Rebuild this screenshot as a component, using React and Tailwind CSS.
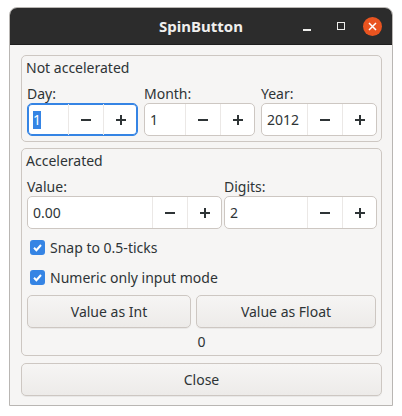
import React from 'react';

// Small GTK-style widgets used by the SpinButton demo window

const Minus = () => (
  <svg width="12" height="12" viewBox="0 0 12 12">
    <path d="M1 6h10" stroke="#2e3436" strokeWidth="2" />
  </svg>
);

const Plus = () => (
  <svg width="12" height="12" viewBox="0 0 12 12">
    <path d="M1 6h10M6 1v10" stroke="#2e3436" strokeWidth="2" />
  </svg>
);

const Spin = ({ value, width, focused }) => (
  <div
    className={`flex h-[33px] shrink-0 rounded-[5px] border bg-white ${focused ? 'border-[#3584e4] shadow-[inset_0_0_0_1px_#3584e4]' : 'border-[#cdc7c2]'}`}
    style={{ width }}
  >
    <div className="flex flex-1 items-center pl-[5px]">
      {focused ? (
        <span className="bg-[#3584e4] text-white leading-[18px]">{value}</span>
      ) : (
        <span>{value}</span>
      )}
    </div>
    <div className="flex w-[35px] items-center justify-center border-l border-[#ebe8e6]">
      <Minus />
    </div>
    <div className="flex w-[34px] items-center justify-center border-l border-[#ebe8e6]">
      <Plus />
    </div>
  </div>
);

const Labeled = ({ label, children }) => (
  <div className="flex flex-col">
    <div className="flex h-[20px] items-center">{label}</div>
    {children}
  </div>
);

const Check = ({ label }) => (
  <div className="flex h-[30px] items-center pl-[3px]">
    <div className="flex h-[15px] w-[15px] items-center justify-center rounded-[3px] bg-[#3584e4]">
      <svg width="11" height="11" viewBox="0 0 11 11">
        <path d="M2 5.8l2.4 2.4L9 3" stroke="white" strokeWidth="2" fill="none" />
      </svg>
    </div>
    <span className="ml-[5px]">{label}</span>
  </div>
);

const Button = ({ children, className = '' }) => (
  <div
    className={`flex h-[33px] items-center justify-center rounded-[5px] border border-[#cdc7c2] bg-gradient-to-b from-[#f6f5f4] to-[#edebe9] shadow-[0_1px_0_rgba(0,0,0,0.05)] ${className}`}
  >
    {children}
  </div>
);

export default function App() {
  return (
    <div
      className="h-[416px] w-[402px] bg-white pl-[9px] pt-[7px] text-[14px] text-[#2e3436]"
      style={{ fontFamily: '"Noto Sans", "Open Sans", sans-serif' }}
    >
      <div className="flex h-[399px] w-[384px] flex-col overflow-hidden rounded-t-[8px] border border-[#b9b6b3] bg-[#f6f5f4]">
        {/* title bar */}
        <div className="relative flex h-[37px] shrink-0 items-center justify-center border-b border-[#1e1e1e] bg-[#2c2c2c]">
          <span className="text-[15px] font-bold text-[#f0efee]">SpinButton</span>
          <div className="absolute right-[6px] top-0 flex h-[36px] items-center">
            <div className="flex w-[34px] justify-center">
              <div className="mt-[7px] h-[2px] w-[8px] bg-[#eeeeec]" />
            </div>
            <div className="flex w-[34px] justify-center">
              <div className="h-[8px] w-[8px] border border-[#eeeeec]" />
            </div>
            <div className="flex w-[28px] justify-center">
              <div className="flex h-[19px] w-[19px] items-center justify-center rounded-full bg-[#e95420]">
                <svg width="9" height="9" viewBox="0 0 9 9">
                  <path d="M1 1l7 7M8 1l-7 7" stroke="white" strokeWidth="1.5" />
                </svg>
              </div>
            </div>
          </div>
        </div>

        <div className="flex flex-1 flex-col pl-[11px] pr-[10px] pt-[10px]">
          {/* not accelerated */}
          <div className="flex flex-col rounded-[5px] border border-[#cdc7c2] px-[5px] pb-[5px]">
            <div className="-ml-[1px] flex h-[22px] items-center">Not accelerated</div>
            <div className="mt-[5px] flex gap-[6px]">
              <Labeled label="Day:">
                <Spin value="1" width={111} focused />
              </Labeled>
              <Labeled label="Month:">
                <Spin value="1" width={111} />
              </Labeled>
              <Labeled label="Year:">
                <Spin value="2012" width={116} />
              </Labeled>
            </div>
          </div>

          {/* accelerated */}
          <div className="mt-[6px] flex flex-col rounded-[5px] border border-[#cdc7c2] px-[5px]">
            <div className="-ml-[1px] flex h-[22px] items-center">Accelerated</div>
            <div className="mt-[5px] flex gap-[2px]">
              <Labeled label="Value:">
                <Spin value="0.00" width={195} />
              </Labeled>
              <Labeled label="Digits:">
                <Spin value="2" width={153} />
              </Labeled>
            </div>
            <div className="mt-[3px]">
              <Check label="Snap to 0.5-ticks" />
              <Check label="Numeric only input mode" />
            </div>
            <div className="mt-[3px] flex gap-[5px]">
              <Button className="w-[164px]">Value as Int</Button>
              <Button className="w-[180px]">Value as Float</Button>
            </div>
            <div className="flex h-[27px] items-center justify-center">0</div>
          </div>

          <Button className="mt-[7px]">Close</Button>
        </div>
      </div>
    </div>
  );
}
